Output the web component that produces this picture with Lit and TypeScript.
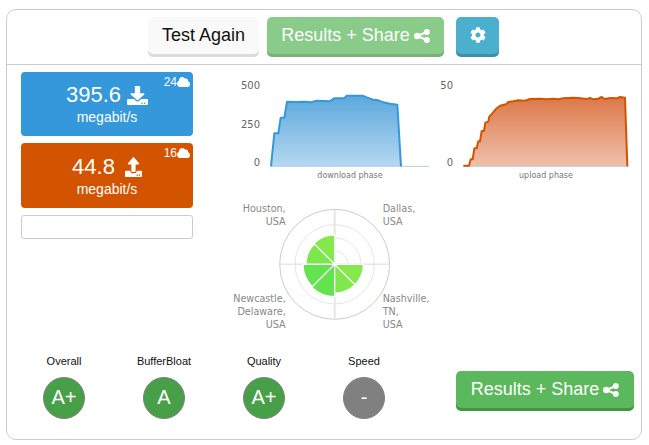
import { LitElement, html, css, svg } from "lit";
import { customElement } from "lit/decorators.js";

const DOWNLOAD = "M216 0h80c13.3 0 24 10.7 24 24v168h87.7c17.8 0 26.7 21.5 14.1 34.1L269.7 378.3c-7.5 7.5-19.8 7.5-27.3 0L90.1 226.1c-12.6-12.6-3.7-34.1 14.1-34.1H192V24c0-13.3 10.7-24 24-24zm296 376v112c0 13.3-10.7 24-24 24H24c-13.3 0-24-10.7-24-24V376c0-13.3 10.7-24 24-24h146.7l49 49c20.1 20.1 52.5 20.1 72.6 0l49-49H488c13.3 0 24 10.7 24 24zm-124 88c0-11-9-20-20-20s-20 9-20 20 9 20 20 20 20-9 20-20zm64 0c0-11-9-20-20-20s-20 9-20 20 9 20 20 20 20-9 20-20z";
const UPLOAD = "M296 384h-80c-13.3 0-24-10.7-24-24V192h-87.7c-17.8 0-26.7-21.5-14.1-34.1L242.3 5.7c7.5-7.5 19.8-7.5 27.3 0l152.2 152.2c12.6 12.6 3.7 34.1-14.1 34.1H320v168c0 13.3-10.7 24-24 24zm216-8v112c0 13.3-10.7 24-24 24H24c-13.3 0-24-10.7-24-24V376c0-13.3 10.7-24 24-24h136v8c0 30.9 25.1 56 56 56h80c30.9 0 56-25.1 56-56v-8h136c13.3 0 24 10.7 24 24zm-124 88c0-11-9-20-20-20s-20 9-20 20 9 20 20 20 20-9 20-20zm64 0c0-11-9-20-20-20s-20 9-20 20 9 20 20 20 20-9 20-20z";
const COG = "M487.4 315.7l-42.6-24.6c4.3-23.2 4.3-47 0-70.2l42.6-24.6c4.9-2.8 7.1-8.6 5.5-14-11.1-35.6-30-67.8-54.7-94.6-3.8-4.1-10-5.1-14.8-2.3L380.8 110c-17.9-15.4-38.5-27.3-60.8-35.1V25.8c0-5.6-3.9-10.5-9.4-11.7-36.7-8.2-74.3-7.8-109.2 0-5.5 1.2-9.4 6.1-9.4 11.7V75c-22.2 7.9-42.8 19.8-60.8 35.1L88.7 85.5c-4.9-2.8-11-1.9-14.8 2.3-24.7 26.7-43.6 58.9-54.7 94.6-1.7 5.4.6 11.2 5.5 14L67.3 221c-4.3 23.2-4.3 47 0 70.2l-42.6 24.6c-4.9 2.8-7.1 8.6-5.5 14 11.1 35.6 30 67.8 54.7 94.6 3.8 4.1 10 5.1 14.8 2.3l42.6-24.6c17.9 15.4 38.5 27.3 60.8 35.1v49.2c0 5.6 3.9 10.5 9.4 11.7 36.7 8.2 74.3 7.8 109.2 0 5.5-1.2 9.4-6.1 9.4-11.7v-49.2c22.2-7.9 42.8-19.8 60.8-35.1l42.6 24.6c4.9 2.8 11 1.9 14.8-2.3 24.7-26.7 43.6-58.9 54.7-94.6 1.5-5.5-.7-11.3-5.6-14.1zM256 336c-44.1 0-80-35.9-80-80s35.9-80 80-80 80 35.9 80 80-35.9 80-80 80z";
const CLOUD = "M537.6 226.6c4.1-10.7 6.4-22.4 6.4-34.6 0-53-43-96-96-96-19.7 0-38.1 6-53.3 16.2C367 64.2 315.3 32 256 32c-88.4 0-160 71.6-160 160 0 2.7.1 5.4.2 8.1C40.2 219.8 0 273.2 0 336c0 79.5 64.5 144 144 144h368c70.7 0 128-57.3 128-128 0-61.9-44-113.6-102.4-125.4z";

const icon = (d: string, vb: string, cls: string) =>
  html`<svg class=${cls} viewBox=${vb} preserveAspectRatio="none" aria-hidden="true"><path d=${d} fill="currentColor"></path></svg>`;

const shareIcon = html`<svg class="i-share" viewBox="0 0 16 14" aria-hidden="true">
  <path d="M3.2 7L12.8 3M3.2 7L12.8 11" stroke="currentColor" stroke-width="2" fill="none"></path>
  <circle cx="3.2" cy="7" r="3.2" fill="currentColor"></circle>
  <circle cx="12.8" cy="3" r="3" fill="currentColor"></circle>
  <circle cx="12.8" cy="11" r="3" fill="currentColor"></circle>
</svg>`;

const DL_POINTS = "123,289 133,190 145,190 152,143 163,143 171,95 200,96 225,95 245,97 258,92 300,94 312,85 342,85 350,77 398,77 410,82 430,89 445,91 460,97 480,101 502,104 513,289";
const UL_POINTS = "100,287 117,287 122,268 128,268 133,235 140,235 145,214 150,214 155,183 162,183 166,158 175,155 178,140 187,130 197,118 210,107 228,103 235,96 250,94 265,91 285,92 300,87 330,86 350,88 370,86 385,88 400,85 430,83 445,84 470,87 480,84 490,88 505,86 515,81 525,87 540,84 560,85 570,81 585,83 592,289";

const WEDGES: [number, number, string][] = [
  [-90, 29.3, "#85e84b"],
  [-135, 28.7, "#7be84c"],
  [180, 31.7, "#62e44e"],
  [135, 32.3, "#62e44e"],
  [90, 28.7, "#7fe84c"],
  [45, 28.7, "#85e84b"],
];

function wedge(start: number, r: number, fill: string) {
  const cx = 104.7, cy = 69.3;
  const end = start - 45;
  const p = (a: number) => `${cx + r * Math.cos((a * Math.PI) / 180)} ${cy + r * Math.sin((a * Math.PI) / 180)}`;
  return svg`<path d="M${cx} ${cy}L${p(start)}A${r} ${r} 0 0 0 ${p(end)}Z" fill=${fill} stroke="#fff" stroke-width="1.2"></path>`;
}

@customElement("app-root")
export class AppRoot extends LitElement {
  static styles = css`
    :host { display: block; padding: 9px 7px 0 6px; font-family: "Liberation Sans", Arial, sans-serif; color: #222; }
    .card { border: 1px solid #ccc; border-radius: 10px; background: #fff; }
    .top { display: flex; justify-content: center; align-items: flex-start; height: 47px; padding: 7px 1px 0 0; border-bottom: 1px solid #ccc; }
    .btn { display: flex; align-items: center; justify-content: center; gap: 4px; height: 37px; border-radius: 5px; font-size: 18px; box-sizing: content-box; }
    .again { width: 111px; background: #f9f9f9; color: #111; box-shadow: 0 3px 0 #dcdcdc; margin-right: 8px; }
    .share { width: 177px; background: #5cb85c; color: #fff; box-shadow: 0 3px 0 #469346; }
    .faded { opacity: 0.72; margin-right: 12px; }
    .gear { width: 43px; background: #4ab0ce; color: #fff; box-shadow: 0 3px 0 #3d8ea7; }
    .i-share { width: 16px; height: 14px; }
    .i-cog { width: 16px; height: 16px; margin-bottom: 2px; }
    .body { display: flex; padding: 7px 0 0 14px; }
    .left { width: 172px; display: flex; flex-direction: column; gap: 7px; }
    .tile { position: relative; height: 64px; border-radius: 4px; color: #fff; display: flex; flex-direction: column; align-items: center; }
    .dl { background: #3498db; }
    .ul { background: #d35400; height: 65px; }
    .val { display: flex; align-items: center; gap: 6px; font-size: 22px; line-height: 28px; margin-top: 9px; }
    .ul .val { gap: 10px; margin-top: 10px; }
    .i-dl { width: 21px; height: 19px; }
    .i-ul { width: 17px; height: 20px; }
    .unit { font-size: 14px; line-height: 18px; margin-top: -1px; }
    .ping { position: absolute; top: 3px; right: 3px; display: flex; align-items: center; font-size: 12px; line-height: 14px; }
    .i-cloud { width: 13px; height: 10px; }
    .blank { height: 22px; border: 1px solid #ccc; border-radius: 3px; }
    .right { margin-left: 37px; }
    .charts { display: flex; }
    .c1 { display: block; width: 200px; height: 118px; }
    .c2 { display: block; width: 210px; height: 118px; }
    .polar { display: block; width: 210px; height: 140px; margin-top: 5px; }
    .axis { font: 10px "DejaVu Sans", sans-serif; fill: #666; }
    .phase { font: 8px "DejaVu Sans", sans-serif; fill: #777; }
    .loc { font: 9.6px "DejaVu Sans", sans-serif; fill: #888; }
    .foot { display: flex; align-items: flex-start; padding: 20px 0 20px 7px; }
    .grades { display: flex; }
    .grade { width: 100px; display: flex; flex-direction: column; align-items: center; gap: 9px; font-size: 11px; line-height: 13px; color: #111; }
    .dot { width: 40px; height: 38px; padding-bottom: 2px; border: 1px solid #808080; border-radius: 50%; background: #47a047; color: #fff; font-size: 20px; display: flex; align-items: center; justify-content: center; }
    .none { background: #808080; }
    .big { margin: 16px 0 0 42px; width: 178px; }
  `;

  private chart(cls: string, points: string, id: string, top: string, bot: string, line: string, ticks: [string, number, number][], phase: string, px: number) {
    const pts = points.split(" ");
    const first = pts[0].split(",")[0];
    const last = pts[pts.length - 1].split(",")[0];
    return html`<svg class=${cls} viewBox="0 0 ${cls === "c1" ? 200 : 210} 118">
      <defs><linearGradient id=${id} x1="0" y1="0" x2="0" y2="1"><stop offset="0" stop-color=${top}></stop><stop offset="1" stop-color=${bot}></stop></linearGradient></defs>
      <g transform="scale(.33333) translate(0 -6)">
        <polygon points="${first},289 ${points} ${last},289" fill="url(#${id})"></polygon>
        <line x1=${first} y1="289" x2="597" y2="289" stroke="#b5cde4" stroke-width="3"></line>
        <polyline points=${points} fill="none" stroke=${line} stroke-width="6" stroke-linejoin="round"></polyline>
      </g>
      ${ticks.map(([t, x, y]) => svg`<text class="axis" x=${x} y=${y} text-anchor="end">${t}</text>`)}
      <text class="phase" x=${px} y="106" text-anchor="middle">${phase}</text>
    </svg>`;
  }

  private loc(lines: string[], x: number, y: number, anchor: string) {
    return lines.map((l, i) => svg`<text class="loc" x=${x} y=${y + i * 13} text-anchor=${anchor}>${l}</text>`);
  }

  render() {
    return html`<div class="card">
      <div class="top">
        <div class="btn again">Test Again</div>
        <div class="btn share faded">Results + Share ${shareIcon}</div>
        <div class="btn gear">${icon(COG, "0 0 512 512", "i-cog")}</div>
      </div>
      <div class="body">
        <div class="left">
          <div class="tile dl">
            <div class="val">395.6 ${icon(DOWNLOAD, "0 0 512 512", "i-dl")}</div>
            <div class="unit">megabit/s</div>
            <div class="ping">24${icon(CLOUD, "0 32 640 448", "i-cloud")}</div>
          </div>
          <div class="tile ul">
            <div class="val">44.8 ${icon(UPLOAD, "0 0 512 512", "i-ul")}</div>
            <div class="unit">megabit/s</div>
            <div class="ping">16${icon(CLOUD, "0 32 640 448", "i-cloud")}</div>
          </div>
          <div class="blank"></div>
        </div>
        <div class="right">
          <div class="charts">
            ${this.chart("c1", DL_POINTS, "gd", "#5ca8de", "#b5d8f0", "#3498db", [["500", 30, 17], ["250", 30, 56], ["0", 30, 94]], "download phase", 120)}
            ${this.chart("c2", UL_POINTS, "gu", "#dc7848", "#f0c0aa", "#d35400", [["50", 23, 17], ["0", 23, 94]], "upload phase", 116)}
          </div>
          <svg class="polar" viewBox="0 0 210 140">
            <circle cx="104.7" cy="69.3" r="55" fill="none" stroke="#ccc" stroke-width="1"></circle>
            <circle cx="104.7" cy="69.3" r="39.7" fill="none" stroke="#e6e6e6" stroke-width="1"></circle>
            <circle cx="104.7" cy="69.3" r="26.3" fill="none" stroke="#e6e6e6" stroke-width="1"></circle>
            <circle cx="104.7" cy="69.3" r="13.2" fill="none" stroke="#e6e6e6" stroke-width="1"></circle>
            <line x1="104.7" y1="15" x2="104.7" y2="124" stroke="#e6e6e6" stroke-width="2"></line>
            <line x1="50" y1="69.3" x2="159" y2="69.3" stroke="#e6e6e6" stroke-width="1.5"></line>
            ${WEDGES.map(([s, r, f]) => wedge(s, r, f))}
            ${this.loc(["Houston,", "USA"], 55.7, 17, "end")}
            ${this.loc(["Dallas,", "USA"], 152.7, 17, "start")}
            ${this.loc(["Newcastle,", "Delaware,", "USA"], 55.7, 107, "end")}
            ${this.loc(["Nashville,", "TN,", "USA"], 152.7, 107, "start")}
          </svg>
        </div>
      </div>
      <div class="foot">
        <div class="grades">
          <div class="grade">Overall<div class="dot">A+</div></div>
          <div class="grade">BufferBloat<div class="dot">A</div></div>
          <div class="grade">Quality<div class="dot">A+</div></div>
          <div class="grade">Speed<div class="dot none">-</div></div>
        </div>
        <div class="btn share big">Results + Share ${shareIcon}</div>
      </div>
    </div>`;
  }
}
